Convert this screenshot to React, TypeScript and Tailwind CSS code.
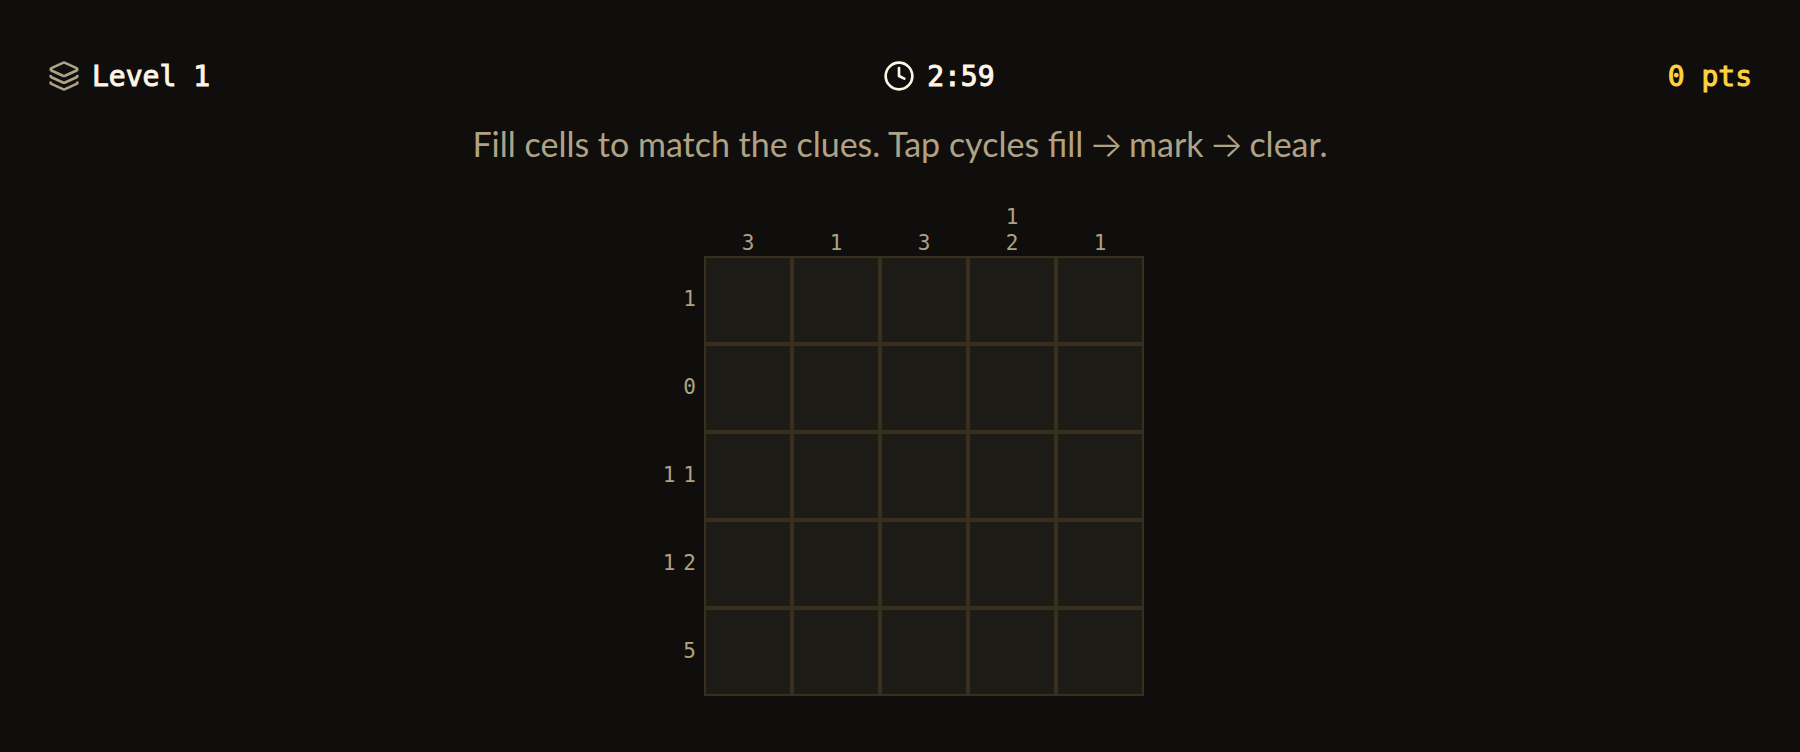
import { Clock, Layers } from "lucide-react";

const columnClues = [[3], [1], [3], [1, 2], [1]];
const rowClues = [[1], [0], [1, 1], [1, 2], [5]];

function Arrow() {
  return <span className="-mx-[3px] font-['Inter',sans-serif] text-[36px] leading-none font-light">→</span>;
}

export default function App() {
  return (
    <main className="flex min-h-screen flex-col bg-[#0f0e0c] px-12 pt-14 font-['DejaVu_Sans_Mono',monospace] text-[#b0a284]">
      <header className="flex items-center justify-between text-[28px] leading-[38px] text-[#fff5e6] [-webkit-text-stroke:1px]">
        <div className="flex items-center gap-3">
          <Layers size={32} className="text-[#b0a284]" />
          <span className="pt-0.5">Level 1</span>
        </div>
        <div className="flex items-center gap-3">
          <Clock size={32} />
          <span className="pt-0.5">2:59</span>
        </div>
        <span className="pt-0.5 text-[#ffd23f]">0 pts</span>
      </header>
      <p className="mt-6 text-center font-['Lato','Inter',sans-serif] text-[34px] leading-[48px]">
        Fill cells to match the clues. Tap cycles fill <Arrow /> mark <Arrow /> clear.
      </p>
      <table className="mx-auto mt-8 border-separate border-spacing-0 text-[21px] leading-[26px]">
        <thead>
          <tr>
            <td className="w-12" />
            {columnClues.map((clues, i) => (
              <th key={i} scope="col" className="pt-1 pb-0 align-bottom font-normal">
                {clues.map((n, j) => (
                  <div key={j}>{n}</div>
                ))}
              </th>
            ))}
          </tr>
        </thead>
        <tbody>
          {rowClues.map((clues, r) => (
            <tr key={r}>
              <th scope="row" className="pr-2 pb-0.5 font-normal">
                <div className="flex justify-end gap-2">
                  {clues.map((n, j) => (
                    <span key={j}>{n}</span>
                  ))}
                </div>
              </th>
              {columnClues.map((_, c) => (
                <td key={c} className="p-0">
                  <button
                    type="button"
                    aria-label={`Row ${r + 1}, column ${c + 1}`}
                    className="block size-22 border-2 border-[#382f1e] bg-[#1c1b16]"
                  />
                </td>
              ))}
            </tr>
          ))}
        </tbody>
      </table>
    </main>
  );
}
